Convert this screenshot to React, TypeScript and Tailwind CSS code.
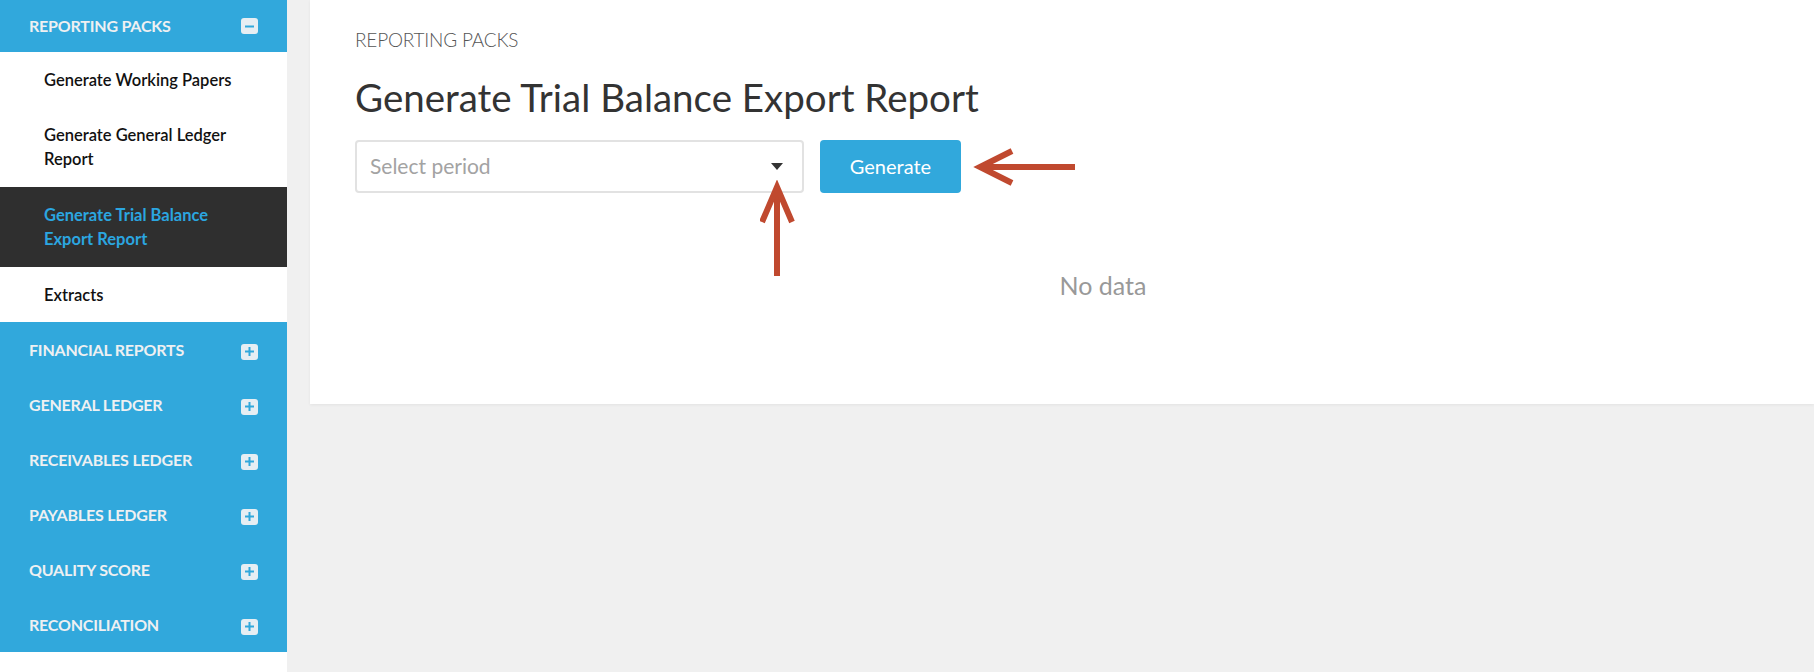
import React from 'react';

const sections = [
  'FINANCIAL REPORTS',
  'GENERAL LEDGER',
  'RECEIVABLES LEDGER',
  'PAYABLES LEDGER',
  'QUALITY SCORE',
  'RECONCILIATION',
];

const ToggleIcon: React.FC<{ open?: boolean }> = ({ open }) => (
  <span className="w-[17px] h-[16px] rounded-[3px] bg-[#e6eef3] flex items-center justify-center">
    <svg width="11" height="11" viewBox="0 0 11 11">
      <rect x="1" y="4.5" width="9" height="2" fill="#31a8dc" />
      {!open && <rect x="4.5" y="1" width="2" height="9" fill="#31a8dc" />}
    </svg>
  </span>
);

const App: React.FC = () => {
  return (
    <main className="flex w-screen h-[672px] bg-[#f0f0f0] overflow-hidden font-['Lato',sans-serif]">
      <aside className="w-[287px] shrink-0 bg-white flex flex-col">
        <div className="h-[52px] bg-[#31a8dc] flex items-center justify-between pl-[29px] pr-[29px]">
          <span className="text-[16px] font-bold tracking-[-0.2px] text-[#eef0f2]">REPORTING PACKS</span>
          <ToggleIcon open />
        </div>
        <a className="block px-[44px] pt-[16px] pb-[15px] text-[16.5px] leading-[24px] font-semibold text-[#111]">
          Generate Working Papers
        </a>
        <a className="block pl-[44px] pr-[30px] py-[16px] text-[16.5px] leading-[24px] font-semibold text-[#111]">
          Generate General Ledger Report
        </a>
        <a className="block pl-[44px] pr-[50px] py-[16px] text-[16.5px] leading-[24px] font-bold text-[#2ba6e0] bg-[#2f2f2f]">
          Generate Trial Balance Export Report
        </a>
        <a className="block px-[44px] pt-[16px] pb-[15px] text-[16.5px] leading-[24px] font-semibold text-[#111]">
          Extracts
        </a>
        {sections.map((s) => (
          <div key={s} className="h-[55px] bg-[#31a8dc] flex items-center justify-between pl-[29px] pr-[29px]">
            <span className="text-[16px] font-bold tracking-[-0.2px] text-[#eef0f2]">{s}</span>
            <span className="mt-[4px]"><ToggleIcon /></span>
          </div>
        ))}
      </aside>

      <section className="flex-1 min-w-0 ml-[23px]">
        <div className="relative bg-white h-[404px] pl-[45px] pt-[26px] overflow-hidden shadow-[0_1px_3px_rgba(0,0,0,0.06)]">
          <p className="text-[19px] font-light text-[#555] tracking-[-0.2px]">REPORTING PACKS</p>
          <h1 className="mt-[20px] text-[38.5px] leading-[44px] text-[#333] font-normal">
            Generate Trial Balance Export Report
          </h1>
          <div className="flex gap-[16px] mt-[21px]">
            <div className="w-[449px] h-[53px] border-2 border-[#e2e2e2] rounded-[4px] flex items-center justify-between pl-[13px] pr-[19px]">
              <span className="text-[21px] text-[#a3a3a3]">Select period</span>
              <svg width="12" height="7" viewBox="0 0 12 7">
                <path d="M0 0 L12 0 L6 7 Z" fill="#333" />
              </svg>
            </div>
            <button className="w-[141px] h-[53px] rounded-[4px] bg-[#31a8dc] text-white text-[20px]">
              Generate
            </button>
          </div>
          <div className="w-[1496px] text-center mt-[74px] text-[25px] text-[#999]">No data</div>

          {/* annotation arrows */}
          <svg className="absolute left-[450px] top-[180px]" width="40" height="100" viewBox="0 0 40 100">
            <path d="M17 7 L17 96" stroke="#c0492f" strokeWidth="6" fill="none" />
            <path d="M2 42 L17 7 L32 42" stroke="#c0492f" strokeWidth="6" fill="none" />
          </svg>
          <svg className="absolute left-[662px] top-[144px]" width="110" height="46" viewBox="0 0 110 46">
            <path d="M8 23 L103 23" stroke="#c0492f" strokeWidth="6" fill="none" />
            <path d="M40 7 L8 23 L40 39" stroke="#c0492f" strokeWidth="6" fill="none" />
          </svg>
        </div>
      </section>
    </main>
  );
};

export default App;
